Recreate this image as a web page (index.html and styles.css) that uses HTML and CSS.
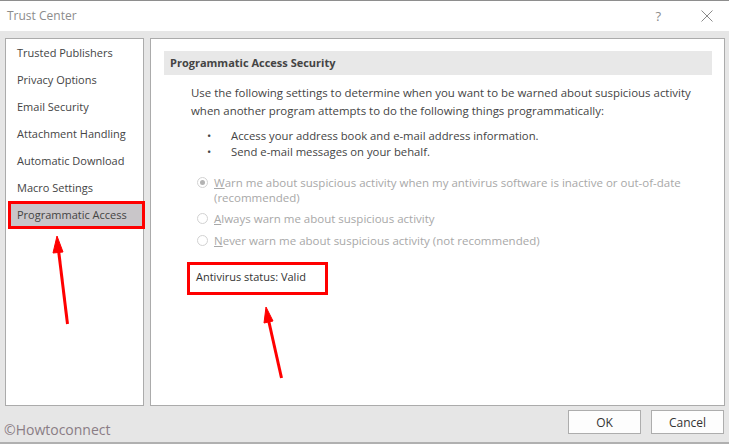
FILE: index.html
```html
<!DOCTYPE html>
<html>
<head>
<meta charset="utf-8">
<link rel="stylesheet" href="styles.css">
</head>
<body>
<div class="window">
  <div class="titlebar">
    <span class="title">Trust Center</span>
    <span class="help">?</span>
    <svg class="close" width="12" height="12" viewBox="0 0 12 12"><path d="M0.5 0.5 L11.5 11.5 M11.5 0.5 L0.5 11.5" stroke="#8a8a8a" stroke-width="1" fill="none"/></svg>
  </div>
  <div class="content">
    <ul class="nav">
      <li>Trusted Publishers</li>
      <li>Privacy Options</li>
      <li>Email Security</li>
      <li>Attachment Handling</li>
      <li>Automatic Download</li>
      <li>Macro Settings</li>
      <li class="selected">Programmatic Access</li>
    </ul>
    <div class="panel">
      <div class="section-head">Programmatic Access Security</div>
      <p class="intro">Use the following settings to determine when you want to be warned about suspicious activity when another program attempts to do the following things programmatically:</p>
      <ul class="bullets">
        <li><span class="dot">•</span>Access your address book and e-mail address information.</li>
        <li><span class="dot">•</span>Send e-mail messages on your behalf.</li>
      </ul>
      <div class="radios">
        <div class="radio"><span class="circle checked"></span><span class="label"><u>W</u>arn me about suspicious activity when my antivirus software is inactive or out-of-date<br>(recommended)</span></div>
        <div class="radio r2"><span class="circle"></span><span class="label"><u>A</u>lways warn me about suspicious activity</span></div>
        <div class="radio r3"><span class="circle"></span><span class="label"><u>N</u>ever warn me about suspicious activity (not recommended)</span></div>
      </div>
      <div class="status">Antivirus status: Valid</div>
    </div>
  </div>
  <div class="footer">
    <span class="copy">©Howtoconnect</span>
    <div class="buttons">
      <button class="btn">OK</button>
      <button class="btn">Cancel</button>
    </div>
  </div>
  <svg class="arrows" width="729" height="444" viewBox="0 0 729 444">
    <g fill="#ff0000" stroke="#ff0000">
      <line x1="67.5" y1="324" x2="58.5" y2="250" stroke-width="3"/>
      <polygon points="57,236 53,253 63,252" stroke-width="1"/>
      <line x1="281.5" y1="378" x2="268.5" y2="320" stroke-width="3"/>
      <polygon points="266,307 264,323 273,321" stroke-width="1"/>
    </g>
  </svg>
</div>
</body>
</html>
```
FILE: styles.css
```css
* { box-sizing: border-box; }
html, body { margin: 0; padding: 0; }
body {
  width: 729px;
  height: 444px;
  overflow: hidden;
  font-family: "Open Sans", "Noto Sans", sans-serif;
  font-size: 11px;
  color: #444;
}
.window {
  position: relative;
  width: 729px;
  height: 444px;
  background: #e6e6e6;
  border-top: 1px solid #8e8e8e;
  border-bottom: 2px solid #b0b0b0;
  display: flex;
  flex-direction: column;
}
.titlebar {
  height: 30px;
  background: #fff;
  display: flex;
  align-items: center;
}
.title {
  margin-left: 7px;
  margin-top: -2px;
  color: #8c8c8c;
  font-size: 12px;
  flex: 1;
}
.help {
  color: #8c8c8c;
  font-size: 13px;
  margin-right: 40px;
}
.close { margin-right: 16px; }
.content {
  display: flex;
  padding-top: 7px;
  padding-left: 5px;
  gap: 6px;
}
.nav {
  list-style: none;
  margin: 0;
  padding: 0;
  width: 139px;
  height: 368px;
  background: #fff;
  border: 1px solid #ababab;
}
.nav li {
  height: 27px;
  line-height: 14px;
  padding: 7px 0 0 11px;
  white-space: nowrap;
}
.nav li.selected {
  background: #c9c6c9;
  margin-top: 2px;
  margin-left: 4px;
  padding-left: 7px;
  height: 24px;
  padding-top: 5px;
  outline: 3px solid #ff0000;
  outline-offset: -1px;
}
.panel {
  width: 575px;
  height: 368px;
  background: #fff;
  border: 1px solid #ababab;
  padding: 12px 12px 0 13px;
}
.section-head {
  height: 24px;
  line-height: 24px;
  background: #e8e8e8;
  padding-left: 6px;
  font-weight: bold;
  color: #444;
}
.intro {
  margin: 9px 0 0 27px;
  line-height: 18px;
  width: 520px;
  font-size: 11.45px;
}
.bullets {
  list-style: none;
  margin: 8px 0 0 0;
  padding: 0 0 0 43px;
  line-height: 16px;
  font-size: 11.3px;
}
.bullets .dot {
  display: inline-block;
  width: 24px;
}
.radios {
  margin-top: 15px;
  color: #a8a8a8;
  padding-left: 33px;
  font-size: 11.5px;
}
.radio {
  display: flex;
  align-items: flex-start;
  line-height: 15px;
}
.radio.r2 { margin-top: 6px; }
.radio.r3 { margin-top: 7px; }
.radio u { text-decoration-color: #a8a8a8; }
.circle {
  width: 11px;
  height: 11px;
  border: 1px solid #d2d2d2;
  border-radius: 50%;
  margin-top: 2px;
  margin-right: 6px;
  flex: none;
  display: flex;
  align-items: center;
  justify-content: center;
}
.circle.checked::after {
  content: "";
  width: 5px;
  height: 5px;
  border-radius: 50%;
  background: #b3b3b3;
}
.status {
  margin: 14px 0 0 23px;
  width: 141px;
  height: 33px;
  border: 3px solid #ff0000;
  padding: 4px 0 0 6px;
  line-height: 16px;
  color: #333;
}
.footer {
  flex: 1;
  display: flex;
  justify-content: space-between;
  align-items: flex-start;
  padding: 4px 5px 0 4px;
}
.copy {
  margin-top: 10px;
  font-family: "Open Sans", "Noto Sans", sans-serif;
  font-size: 14px;
  color: #8a7d85;
}
.buttons { display: flex; gap: 10px; }
.btn {
  width: 73px;
  height: 24px;
  background: #fdfdfd;
  border: 1px solid #adadad;
  font-family: "Open Sans", "Noto Sans", sans-serif;
  font-size: 12px;
  color: #333;
  padding: 0;
}
.arrows {
  position: absolute;
  left: 0;
  top: -1px;
  pointer-events: none;
}
```
